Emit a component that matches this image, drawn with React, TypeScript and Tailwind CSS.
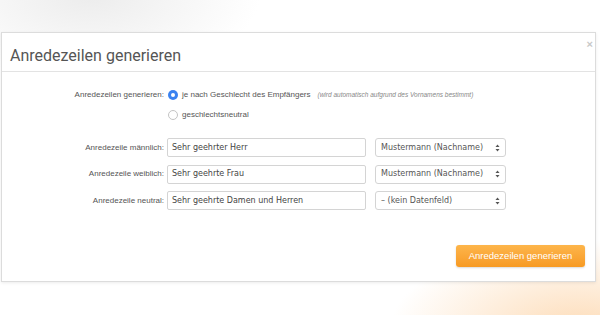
import React from "react";

const lbl = "font-['Liberation_Sans',Arial,sans-serif]";
const inp = "font-['DejaVu_Sans',Verdana,sans-serif]";

function Row({ label, value, sel }: { label: string; value: string; sel: string }) {
  return (
    <div className="flex items-center h-[19px]">
      <div className={`w-[165px] text-right pr-[3px] text-[8px] text-[#555] ${lbl}`}>{label}</div>
      <div className={`w-[199px] h-[19px] border border-[#d4d4d4] rounded-[2px] flex items-center pl-[4px] text-[8px] text-[#444] ${inp}`}>{value}</div>
      <div className={`ml-[9px] w-[131px] h-[19px] border border-[#d4d4d4] rounded-[3px] flex items-center justify-between pl-[5px] pr-[5px] text-[8px] text-[#555] ${inp}`}>
        <span>{sel}</span>
        <svg width="5" height="8" viewBox="0 0 5 8">
          <path d="M0.5 3 L2.5 0.5 L4.5 3 Z" fill="#555" />
          <path d="M0.5 5 L2.5 7.5 L4.5 5 Z" fill="#555" />
        </svg>
      </div>
    </div>
  );
}

export default function App() {
  return (
    <div className="relative w-[600px] h-[315px] overflow-hidden bg-white">
      <div className="absolute -left-[80px] -top-[90px] w-[340px] h-[170px] rounded-full bg-[radial-gradient(closest-side,#ececec,rgba(255,255,255,0))]" />
      <div className="absolute left-[390px] top-[240px] w-[380px] h-[180px] rounded-full bg-[radial-gradient(closest-side,#fddcb8,rgba(255,255,255,0))]" />
      <div className="relative pt-[32px] pl-[1px]">
        <div className="w-[595px] h-[250px] bg-white border border-[#dcdcdc] shadow-[0_1px_3px_rgba(0,0,0,0.08)] flex flex-col">
          <div className="relative h-[39px] border-b border-[#e3e3e3] flex items-end pb-[5px] pl-[8px]">
            <span className={`text-[16px] leading-[20px] text-[#555] font-['Roboto',Arial,sans-serif]`}>Anredezeilen generieren</span>
            <span className={`absolute right-[2px] top-[5px] text-[11px] leading-[12px] text-[#c8c8c8] font-bold ${lbl}`}>×</span>
          </div>
          <div className="flex flex-col pt-[17px]">
            <div className="flex items-center h-[12px]">
              <div className={`w-[166px] text-right pr-[4px] text-[8px] text-[#555] ${lbl}`}>Anredezeilen generieren:</div>
              <span className="w-[10px] h-[10px] rounded-full bg-[#3b82f0] flex items-center justify-center">
                <span className="w-[4px] h-[4px] rounded-full bg-white" />
              </span>
              <span className={`ml-[4px] text-[8px] text-[#555] ${lbl}`}>je nach Geschlecht des Empfängers</span>
              <span className={`ml-[7px] text-[6.5px] italic text-[#888] ${lbl}`}>(wird automatisch aufgrund des Vornamens bestimmt)</span>
            </div>
            <div className="flex items-center h-[12px] mt-[8px]">
              <div className="w-[166px]" />
              <span className="w-[10px] h-[10px] rounded-full border border-[#c4c4c4] bg-white" />
              <span className={`ml-[4px] text-[8px] text-[#555] ${lbl}`}>geschlechtsneutral</span>
            </div>
            <div className="flex flex-col gap-[7.5px] mt-[17px]">
              <Row label="Anredezeile männlich:" value="Sehr geehrter Herr" sel="Mustermann (Nachname)" />
              <Row label="Anredezeile weiblich:" value="Sehr geehrte Frau" sel="Mustermann (Nachname)" />
              <Row label="Anredezeile neutral:" value="Sehr geehrte Damen und Herren" sel="– (kein Datenfeld)" />
            </div>
            <div className="flex justify-end pr-[10px] mt-[35px]">
              <div className={`w-[129px] h-[22px] rounded-[3px] bg-gradient-to-b from-[#fdb54a] to-[#f79a22] shadow-[0_1px_2px_rgba(0,0,0,0.15)] flex items-center justify-center text-[9.5px] text-white ${lbl}`}>
                Anredezeilen generieren
              </div>
            </div>
          </div>
        </div>
      </div>
    </div>
  );
}
